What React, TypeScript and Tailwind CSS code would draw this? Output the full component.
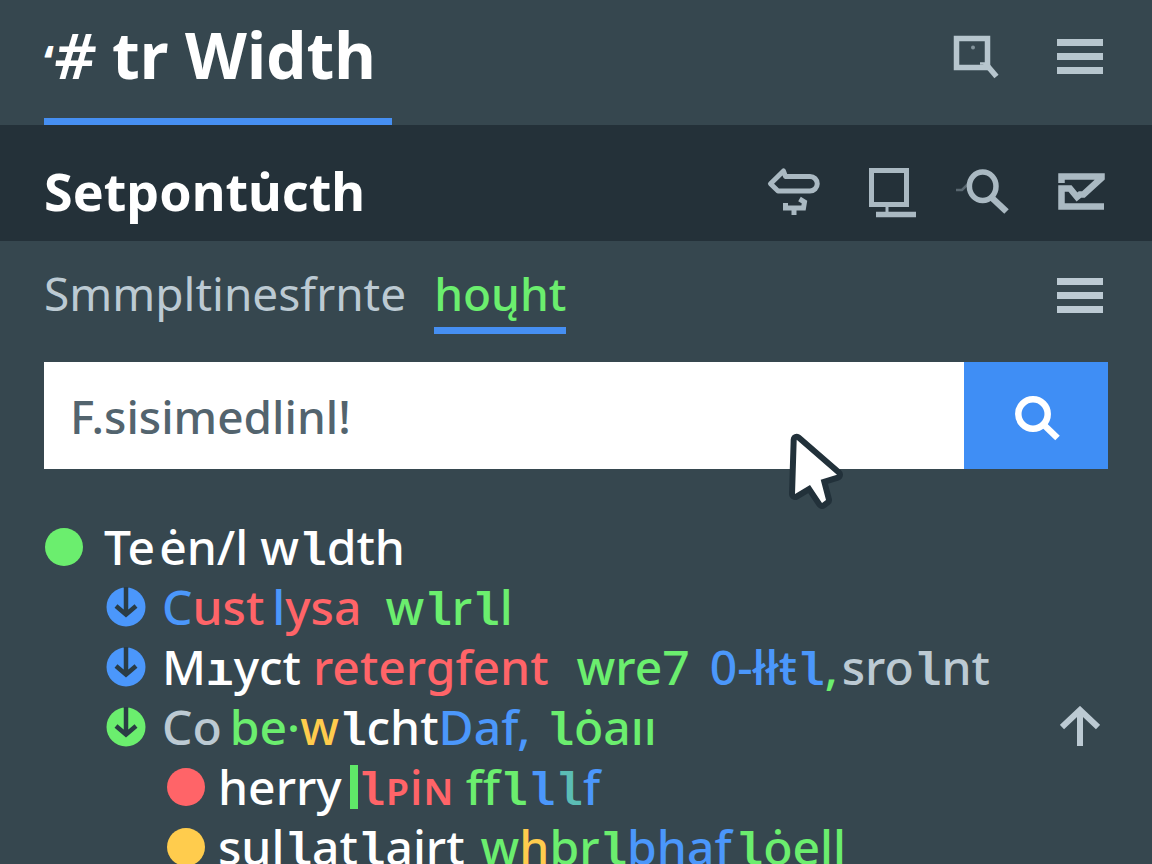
import type { ReactNode } from "react";

const iconClass = "block size-[52px] shrink-0 overflow-visible fill-none stroke-current";

const MenuIcon = () => (
    <svg viewBox="0 0 52 52" className={iconClass} aria-hidden="true">
        <path d="M1 12.500h46M1 26.500h46M1 40.500h46" strokeWidth="7" />
    </svg>
);

const FrameSearchIcon = () => (
    <svg viewBox="0 0 52 52" className={iconClass} aria-hidden="true">
        <rect x="2.5" y="8.5" width="31" height="29" strokeWidth="5.500" />
        <path d="M31 33l11.500 13.500" strokeWidth="5.500" />
        <path d="M26 33.500h6" strokeWidth="2.500" />
        <circle cx="19" cy="17.500" r="2" className="fill-current stroke-none opacity-60" />
    </svg>
);

const SignIcon = () => (
    <svg viewBox="0 0 52 52" className={iconClass} aria-hidden="true">
        <path d="M2.500 18.700L15.500 6l2 5.500h24.500a7.200 7.200 0 0 1 0 14.500H10z" strokeWidth="5" strokeLinejoin="round" />
        <path d="M17.500 38v5h18l1-6-5-3M26 43v7" strokeWidth="5" />
    </svg>
);

const MonitorIcon = () => (
    <svg viewBox="0 0 52 52" className={iconClass} aria-hidden="true">
        <rect x="7.5" y="5.500" width="35" height="34" strokeWidth="5" />
        <path d="M23 42v5" strokeWidth="3" />
        <path d="M12 49.500h40" strokeWidth="5.500" />
    </svg>
);

const LensIcon = () => (
    <svg viewBox="0 0 52 52" className={iconClass} aria-hidden="true">
        <ellipse cx="22.700" cy="21.300" rx="13.300" ry="14.300" strokeWidth="5.500" />
        <path d="M31 32l15.500 14.500" strokeWidth="6.500" />
        <path d="M-4 25h6l6-6" strokeWidth="2.500" className="opacity-40" />
    </svg>
);

const MailCheckIcon = () => (
    <svg viewBox="0 0 52 52" className={iconClass} aria-hidden="true">
        <path d="M5.500 18v-6.500H45.500V13L27.500 29.500H24l-3 2.500-7-8.500H5.500V41.500H48" strokeWidth="6.500" />
    </svg>
);

const SearchIcon = () => (
    <svg viewBox="0 0 52 52" className={iconClass} aria-hidden="true">
        <circle cx="23" cy="24" r="14.700" strokeWidth="6.500" />
        <path d="M34 35l13.500 13" strokeWidth="6.500" />
    </svg>
);

const Cursor = () => (
    <svg
        viewBox="0 0 60 90"
        className="pointer-events-none absolute left-[740px] top-[62px] z-10 h-[90px] w-[60px] overflow-visible"
        aria-hidden="true"
    >
        <path
            d="M12.700 15.700L53 50.700l-16.300 5L42 76l-4 3-12-18-15 9z"
            fill="#fff"
            stroke="#22313a"
            strokeWidth="12"
            strokeLinejoin="round"
            paintOrder="stroke"
        />
    </svg>
);

const Dot = ({ color }: { color: string }) => <span className={`m-px size-[38px] shrink-0 rounded-full ${color}`} />;

const ArrowDot = ({ color }: { color: string }) => (
    <svg viewBox="0 0 40 40" className={`size-10 shrink-0 ${color}`} aria-hidden="true">
        <circle cx="20" cy="20" r="19.500" fill="currentColor" />
        <path d="M20 0v28M10 19l10 8.500L30 19" fill="none" stroke="#2a3c45" strokeWidth="4.500" />
    </svg>
);

// Letters that carry a foot, set in the mono face
const Slab = ({ children }: { children: ReactNode }) => (
    <span className="font-['Liberation_Mono',monospace] text-[46px] leading-none font-bold">{children}</span>
);

const white = "text-white";
const green = "text-[#6bee6e]";
const blue = "text-[#4b97fb]";
const red = "text-[#ff6468]";
const yellow = "text-[#ffcc4d]";
const gray = "text-[#bccad3]";

export default function App() {
    return (
        <div className="relative flex h-screen flex-col overflow-hidden bg-[#36474f] font-['Noto_Sans','Open_Sans',sans-serif] text-white">
            {/* Title bar */}
            <header className="flex items-start justify-between px-11">
                <h1 className="border-b-7 border-[#468ff2] pt-[23px] pr-4 pb-[25px] text-[64px] leading-16 font-bold whitespace-nowrap">
                    <span className="text-[46px]">‘</span>
                    <span className="font-semibold italic">#</span> tr Width
                </h1>
                <div className="flex gap-[50px] pt-[30px] text-[#b7c6ce]">
                    <button type="button" aria-label="Find">
                        <FrameSearchIcon />
                    </button>
                    <button type="button" aria-label="Menu">
                        <MenuIcon />
                    </button>
                </div>
            </header>

            {/* Section bar */}
            <section className="flex items-center justify-between bg-[#243139] px-11 pt-8 pb-4">
                <h2 className="text-[52px] leading-[68px] font-bold">Setpontu̇cth</h2>
                <div className="flex gap-11 text-[#aab9c2]">
                    <button type="button" aria-label="Directions">
                        <SignIcon />
                    </button>
                    <button type="button" aria-label="Display">
                        <MonitorIcon />
                    </button>
                    <button type="button" aria-label="Zoom">
                        <LensIcon />
                    </button>
                    <button type="button" aria-label="Messages">
                        <MailCheckIcon />
                    </button>
                </div>
            </section>

            {/* Tabs */}
            <nav className="flex items-start justify-between px-11 pt-6 pb-7 text-[46px] leading-14">
                <div className="flex gap-7">
                    <a href="#all" className={gray}>Smmpltinesfrnte</a>
                    <a href="#active" className={`border-b-7 border-[#468ff2] pb-[6px] font-medium ${green}`}>hoųht</a>
                </div>
                <button type="button" aria-label="List menu" className="pt-1 text-[#bccad3]">
                    <MenuIcon />
                </button>
            </nav>

            <form className="relative mx-11 flex shrink-0" onSubmit={(e) => e.preventDefault()}>
                <input
                    type="text"
                    aria-label="Search"
                    defaultValue="F.sisimedlinl!"
                    className="h-[107px] min-w-0 flex-1 bg-white px-[26px] text-[46px] font-medium text-[#53646e] outline-none"
                />
                <button type="submit" aria-label="Search" className="flex w-36 items-center justify-center bg-[#3f8ef5]">
                    <SearchIcon />
                </button>
                <Cursor />
            </form>

            {/* Result tree */}
            <ul className="mt-12 text-[48px] leading-[60px] font-medium whitespace-nowrap [&>li]:flex [&>li]:h-[60px] [&>li]:shrink-0 [&>li]:items-center">
                <li className="gap-5 pl-11">
                    <Dot color="bg-[#6bee6e]" />
                    <div className="flex">
                        <span>Te</span>
                        <span className="ml-1">ėn/l</span>
                        <span className="ml-3">w<Slab>l</Slab>dth</span>
                    </div>
                </li>
                <li className="gap-4 pl-[106px]">
                    <ArrowDot color={blue} />
                    <div className="flex">
                        <span className={blue}>C</span>
                        <span className={red}>ust</span>
                        <span className={`ml-2 ${blue}`}>l</span>
                        <span className={red}>ysa</span>
                        <span className={`ml-6 ${green}`}>w<Slab>l</Slab>r<Slab>l</Slab>l</span>
                    </div>
                </li>
                <li className="gap-4 pl-[106px]">
                    <ArrowDot color={blue} />
                    <div className="flex">
                        <span className={white}>M<Slab>ı</Slab>yct</span>
                        <span className={`ml-3 ${red}`}>retergfent</span>
                        <span className={`ml-7 ${green}`}>wre7</span>
                        <span className={`ml-5 ${blue}`}>0-łłŧ<Slab>l</Slab></span>
                        <span className={green}>,</span>
                        <span className={`ml-1 ${gray}`}>sro<Slab>l</Slab>nt</span>
                    </div>
                </li>
                <li className="gap-4 pl-[106px]">
                    <ArrowDot color={green} />
                    <div className="flex">
                        <span className={gray}>Co</span>
                        <span className={`ml-2 ${green}`}>be·</span>
                        <span className={yellow}>w</span>
                        <span className={white}><Slab>l</Slab>cht</span>
                        <span className={blue}>Daf,</span>
                        <span className={`ml-4 ${green}`}><Slab>l</Slab>ȯaıı</span>
                    </div>
                </li>
                <li className="gap-3 pl-[166px]">
                    <Dot color="bg-[#ff6468]" />
                    <div className="flex items-center">
                        <span>herry</span>
                        <span className="ml-2 h-11 w-2 bg-[#5fe868]" />
                        <span className={red}><Slab>l</Slab>ᴘiɴ</span>
                        <span className={`ml-3 ${green}`}>ff<Slab>l</Slab></span>
                        <span className={blue}><Slab>l</Slab></span>
                        <span className="text-[#5bbdb5]"><Slab>l</Slab></span>
                        <span className={blue}>f</span>
                    </div>
                </li>
                <li className="gap-3 pl-[166px]">
                    <Dot color="bg-[#ffcc4d]" />
                    <div className="flex">
                        <span>sul<Slab>l</Slab>at<Slab>l</Slab>airt</span>
                        <span className={`ml-4 ${green}`}>w</span>
                        <span className={yellow}>h</span>
                        <span className={green}>br<Slab>l</Slab></span>
                        <span className={blue}>bhaf</span>
                        <span className={`ml-1 ${green}`}><Slab>l</Slab>ȯell</span>
                    </div>
                </li>
            </ul>

            <button type="button" aria-label="Back to top" className="absolute right-[52px] bottom-[118px] text-[#bccad3]">
                <svg viewBox="0 0 40 40" className="block size-10 fill-none stroke-current" aria-hidden="true">
                    <path d="M20 40V4M2 21L20 4l18 17" strokeWidth="6" />
                </svg>
            </button>
        </div>
    );
}
